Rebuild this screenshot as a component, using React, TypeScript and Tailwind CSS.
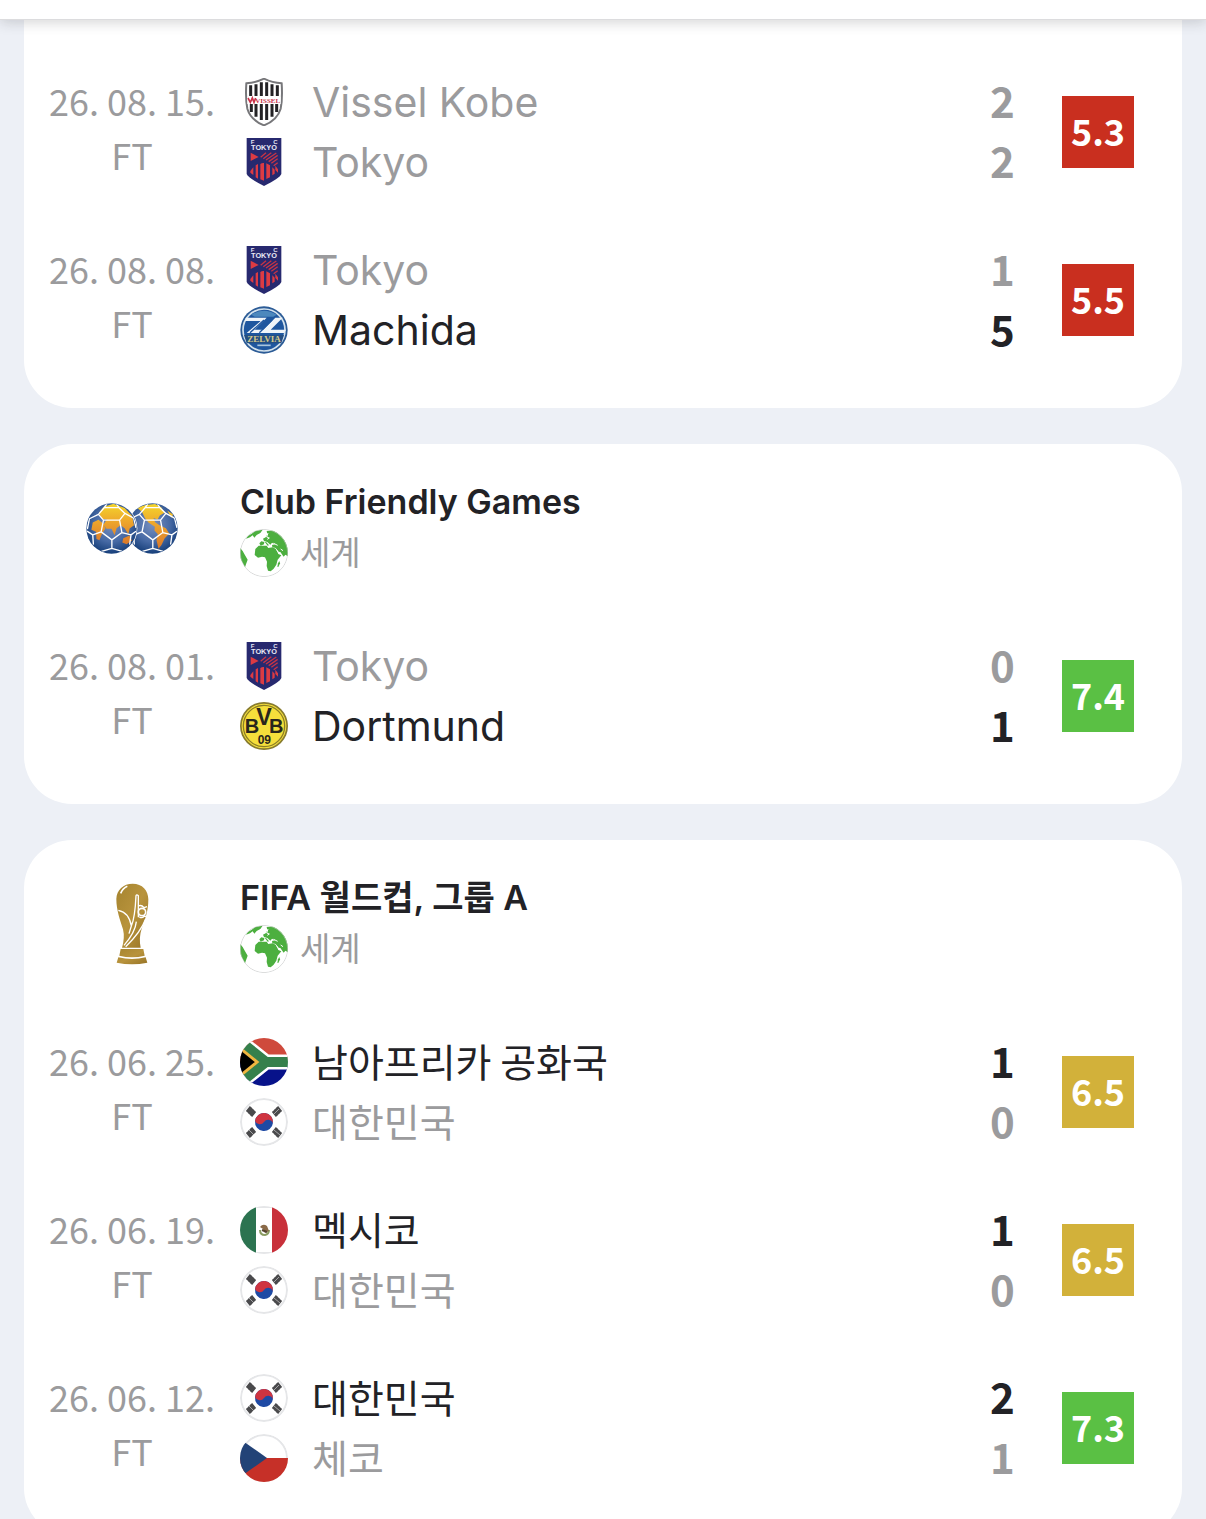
import type { ReactNode } from "react";
import clsx from "clsx";

interface Team {
  name: string;
  icon: ReactNode;
  score: number;
  win?: boolean;
}

interface Match {
  date: string;
  rating: string;
  teams: Team[];
}

interface Tournament {
  title?: string;
  logo?: ReactNode;
  matches: Match[];
}

const KobeIcon = () => (
  <svg viewBox="0 0 144 144" className="size-12 shrink-0" aria-hidden="true">
    <path
      d="M19 16Q48 14 72 2Q96 14 125 16Q128 62 122 92Q112 126 72 142Q32 126 22 92Q16 62 19 16Z"
      fill="#fff"
      stroke="#77777a"
      strokeWidth="6"
    />
    <path
      d="M32 22V54M48 19V54M64 13V54M80 13V54M96 19V54M112 22V54M34 76V102M48 76V116M64 76V126M80 76V126M96 76V116M110 76V102"
      stroke="#232225"
      strokeWidth="9"
    />
    <path d="M22 56H122V78H22Z" fill="#fff" />
    <path d="M24 60L31 73L37 60L42 73L47 60" stroke="#c8324a" strokeWidth="5" fill="none" />
    <text x="83" y="75" fontSize="21" textAnchor="middle" className="font-['Liberation_Serif'] font-bold" fill="#c8324a">
      VISSEL
    </text>
  </svg>
);

const TokyoIcon = () => (
  <svg viewBox="0 0 144 144" className="size-12 shrink-0" aria-hidden="true">
    <path d="M20 0H124V108Q120 120 72 144Q24 120 20 108Z" fill="#27296f" />
    <g className="font-['Liberation_Sans'] font-bold" fill="#e8e8f4" textAnchor="middle">
      <text x="38" y="17" fontSize="18">F</text>
      <text x="106" y="17" fontSize="18">C</text>
      <text x="72" y="37" fontSize="22">TOKYO</text>
    </g>
    <path d="M32 44L56 57L32 69Z" fill="#dd3b43" />
    <path
      d="M62 58L78 44M70 62L94 44M78 66L109 45M86 71L113 52M94 76L113 62M101 83L113 74"
      stroke="#c63545"
      strokeWidth="4"
    />
    <path
      d="M31 99L40 88V111L31 104ZM47 82L54 78V122L47 118ZM61 78Q66 74 72 75V128L61 124ZM79 76L90 82V118L79 123ZM97 88V112L104 107V95ZM106 83L114 94V104L106 96Z"
      fill="#dd3b43"
    />
  </svg>
);

const MachidaIcon = () => (
  <svg viewBox="0 0 144 144" className="size-12 shrink-0" aria-hidden="true">
    <circle cx="72" cy="72" r="71" fill="#2b5b96" />
    <circle cx="72" cy="72" r="63" fill="#1f579f" stroke="#d3e2ed" strokeWidth="5" />
    <path d="M34 26Q72 2 110 26L100 32H44Z" fill="#4c88bd" />
    <path d="M18 35H80L44 71H70L106 35H128L92 71H138L132 81H20L62 45H14Z" fill="#f0f5f9" />
    <path d="M72 42L30 80M96 42L58 80" stroke="#1f579f" strokeWidth="4" />
    <path d="M12 87H132L124 112H20Z" fill="#254f82" />
    <text x="72" y="109" fontSize="27" textAnchor="middle" className="font-['Liberation_Serif'] font-bold" fill="#d4c98a">
      ZELVIA
    </text>
    <path d="M52 118H92" stroke="#a9c5dc" strokeWidth="5" />
  </svg>
);

const DortmundIcon = () => (
  <svg viewBox="0 0 144 144" className="size-12 shrink-0" aria-hidden="true">
    <circle cx="72" cy="72" r="72" fill="#877b2e" />
    <circle cx="72" cy="72" r="67" fill="#f5df3b" />
    <circle cx="72" cy="72" r="62" fill="none" stroke="#8b7e27" strokeWidth="4" />
    <g className="font-['Liberation_Sans'] font-bold" fill="#29261c" textAnchor="middle">
      <text x="36" y="93" fontSize="60">B</text>
      <text x="72" y="69" fontSize="70">V</text>
      <text x="109" y="93" fontSize="60">B</text>
      <text x="73" y="127" fontSize="36">09</text>
    </g>
  </svg>
);

const GlobeIcon = () => (
  <svg viewBox="0 0 144 144" className="size-12 shrink-0 rounded-full" aria-hidden="true">
    <circle cx="72" cy="72" r="71" fill="#fff" />
    <g fill="#4caf3f">
      <path d="M46 60L56 50L80 50L85 57L98 55L108 60L115 75L124 79L113 92L109 107L101 119L92 127L84 125L80 111L81 98L75 85L66 83L54 86L44 78Z" />
      <path d="M114 103L118 96L120 103L115 114L112 113Z" />
      <path d="M0 56L8 66L16 80L23 92L18 106L15 115L7 100L1 90Z" />
      <path d="M24 21L35 14L46 6L68 2L61 12L50 18L43 26L38 19L30 25L18 29Z" />
      <path d="M58 43L64 37L73 39L72 46L62 50ZM74 38L79 40L87 49L83 50Z" />
      <path d="M80 6L104 4L128 22L144 50V82L136 77L131 83L121 69L115 68L107 57L97 55L96 48L106 46L96 41L91 47L82 39L72 36L69 29L77 25L82 16Z" />
    </g>
    <path d="M84 12L80 24L88 27L82 31M101 43L113 49M109 61L118 74M122 60L129 65" stroke="#fff" strokeWidth="3" fill="none" />
    <circle cx="72" cy="72" r="71" fill="none" stroke="#bfc1c1" strokeWidth="2" />
  </svg>
);

const BallLines = () => (
  <path
    d="M52 51H100L107 88L77 110L45 86ZM52 51L37 34L54 14H98L116 31L100 51M37 34L10 47L4 78M54 14L62 3M98 14L91 3M116 31L142 45L149 74M45 86L20 95L3 84M20 95L22 124M77 110V135L46 144M77 135L108 144M107 88L134 95L149 84M134 95L130 124"
    fill="none"
    stroke="#fff"
    strokeWidth="4"
    strokeLinejoin="round"
  />
);

const FriendlyLogo = () => (
  <svg viewBox="0 0 274 152" className="h-[51px] w-[92px]" aria-hidden="true">
    <defs>
      <radialGradient id="ball-sea" cx="50%" cy="42%" r="58%">
        <stop offset="0" stopColor="#7890c0" />
        <stop offset="0.6" stopColor="#4669a4" />
        <stop offset="1" stopColor="#173f7a" />
      </radialGradient>
      <linearGradient id="ball-land" x1="0" y1="0" x2="0" y2="1">
        <stop offset="0" stopColor="#f4d52b" />
        <stop offset="0.45" stopColor="#eda52c" />
        <stop offset="1" stopColor="#d9772a" />
      </linearGradient>
      <clipPath id="ball-clip">
        <circle cx="76" cy="76" r="74" />
      </clipPath>
    </defs>
    <g transform="translate(122 0)">
      <circle cx="76" cy="76" r="75" fill="url(#ball-sea)" />
      <g clipPath="url(#ball-clip)">
        <path
          d="M30 14L55 6L84 3L102 13L113 28L98 37L91 49L79 45L84 57L97 66L116 75L126 91L112 106L103 125L94 136L88 110L92 93L82 82L83 71L64 58L53 44L45 27ZM120 22L138 34L132 44Z"
          fill="url(#ball-land)"
        />
        <BallLines />
      </g>
    </g>
    <circle cx="76" cy="76" r="77" fill="#fff" />
    <circle cx="76" cy="76" r="75" fill="url(#ball-sea)" />
    <g clipPath="url(#ball-clip)">
      <path
        d="M38 30L52 12L82 2L115 15L137 38L143 66L130 76L126 93L115 75L103 66L91 75L85 96L76 77L61 77L52 64L62 49L47 47ZM20 58L37 50L51 61L58 76L48 91L40 111L31 107L30 86L16 80ZM111 105L129 97L137 112L121 123L108 118Z"
        fill="url(#ball-land)"
      />
      <BallLines />
    </g>
  </svg>
);

const WorldCupLogo = () => (
  <svg viewBox="0 0 102 246" className="h-[82px] w-[34px]" aria-hidden="true">
    <defs>
      <linearGradient id="trophy-gold" x1="0" y1="0" x2="1" y2="1">
        <stop offset="0" stopColor="#a5842f" />
        <stop offset="0.5" stopColor="#b8933c" />
        <stop offset="1" stopColor="#967326" />
      </linearGradient>
    </defs>
    <path
      d="M53 2C82 2 100 22 100 49C100 84 91 107 80 137Q71 163 77 194H21Q30 164 24 139C16 113 4 82 4 48C5 20 25 2 53 2Z"
      fill="url(#trophy-gold)"
    />
    <path d="M17 198H85L89 218Q51 228 13 218ZM10 223Q51 233 92 223L97 239Q51 249 5 239Z" fill="url(#trophy-gold)" />
    <path
      d="M10 82Q42 88 49 129Q60 104 63 38Q65 33 70 38V69Q79 64 87 74L96 71M70 69V103M73 101Q81 108 88 99L96 101M64 116Q61 148 27 187M92 108Q77 148 32 191M49 129L42 152"
      fill="none"
      stroke="#fff"
      strokeWidth="4"
    />
    <circle cx="81" cy="87" r="11" fill="url(#trophy-gold)" stroke="#fff" strokeWidth="5" />
    <path d="M17 31Q24 15 37 10" fill="none" stroke="#fff" strokeWidth="5" />
  </svg>
);

const SouthAfricaFlag = () => (
  <svg viewBox="0 0 48 48" className="size-12 shrink-0 rounded-full" aria-hidden="true">
    <path d="M0 0H48V24H0Z" fill="#cf4a3c" />
    <path d="M0 24H48V48H0Z" fill="#07128a" />
    <path d="M-4 0L26 24L-4 48M26 24H48" stroke="#fff" strokeWidth="15" fill="none" />
    <path d="M-4 0L26 24L-4 48M26 24H48" stroke="#35804c" strokeWidth="10" fill="none" />
    <path d="M-5 6L17 24L-5 42Z" fill="#000" stroke="#efb540" strokeWidth="3" />
  </svg>
);

const KoreaFlag = () => (
  <svg viewBox="0 0 48 48" className="size-12 shrink-0 rounded-full" aria-hidden="true">
    <circle cx="24" cy="24" r="23" fill="#fff" stroke="#e5e6e8" strokeWidth="2" />
    <g transform="rotate(6 24 24)">
      <circle cx="24" cy="24" r="9" fill="#1f4ba4" />
      <path d="M15 24A9 9 0 0 1 33 24A5 5 0 0 0 24 24A5 5 0 0 1 15 24Z" fill="#cf3440" />
    </g>
    <g stroke="#4a4a4c" strokeWidth="3">
      <path d="M7 14L11 9M9 16L13 11M11 18L15 13" />
      <path d="M41 14L37 9M39 16L35 11M37 18L33 13" />
      <path d="M7 34L11 39M9 32L13 37M11 30L15 35" />
      <path d="M41 34L37 39M39 32L35 37M37 30L33 35" />
    </g>
    <path d="M34 16L39 11M9 32L14 37M34 32L40 37" stroke="#fff" strokeWidth="1" opacity="0.5" />
  </svg>
);

const MexicoFlag = () => (
  <svg viewBox="0 0 48 48" className="size-12 shrink-0 rounded-full" aria-hidden="true">
    <path d="M0 0H48V48H0Z" fill="#fff" />
    <path d="M0 0H16V48H0Z" fill="#2c7350" />
    <path d="M32 0H48V48H32Z" fill="#c8303a" />
    <path d="M16 1H32M16 47H32" stroke="#e5e6e8" strokeWidth="2" />
    <path d="M20 24Q20 29 25 29Q29 28 29 24" fill="none" stroke="#8a9c62" strokeWidth="2" />
    <path d="M20 21Q23 17 27 20L29 25L25 27L23 23Z" fill="#8a6a48" />
    <path d="M22 24L27 26" stroke="#53422e" strokeWidth="2" />
  </svg>
);

const CzechFlag = () => (
  <svg viewBox="0 0 48 48" className="size-12 shrink-0 rounded-full" aria-hidden="true">
    <circle cx="24" cy="24" r="23" fill="#fff" stroke="#e5e6e8" strokeWidth="2" />
    <path d="M0 24H48V48H0Z" fill="#c63028" />
    <path d="M0 5L27 24L0 43Z" fill="#234377" />
  </svg>
);

const tournaments: Tournament[] = [
  {
    matches: [
      {
        date: "26. 08. 15.",
        rating: "5.3",
        teams: [
          { name: "Vissel Kobe", icon: <KobeIcon />, score: 2 },
          { name: "Tokyo", icon: <TokyoIcon />, score: 2 },
        ],
      },
      {
        date: "26. 08. 08.",
        rating: "5.5",
        teams: [
          { name: "Tokyo", icon: <TokyoIcon />, score: 1 },
          { name: "Machida", icon: <MachidaIcon />, score: 5, win: true },
        ],
      },
    ],
  },
  {
    title: "Club Friendly Games",
    logo: <FriendlyLogo />,
    matches: [
      {
        date: "26. 08. 01.",
        rating: "7.4",
        teams: [
          { name: "Tokyo", icon: <TokyoIcon />, score: 0 },
          { name: "Dortmund", icon: <DortmundIcon />, score: 1, win: true },
        ],
      },
    ],
  },
  {
    title: "FIFA 월드컵, 그룹 A",
    logo: <WorldCupLogo />,
    matches: [
      {
        date: "26. 06. 25.",
        rating: "6.5",
        teams: [
          { name: "남아프리카 공화국", icon: <SouthAfricaFlag />, score: 1, win: true },
          { name: "대한민국", icon: <KoreaFlag />, score: 0 },
        ],
      },
      {
        date: "26. 06. 19.",
        rating: "6.5",
        teams: [
          { name: "멕시코", icon: <MexicoFlag />, score: 1, win: true },
          { name: "대한민국", icon: <KoreaFlag />, score: 0 },
        ],
      },
      {
        date: "26. 06. 12.",
        rating: "7.3",
        teams: [
          { name: "대한민국", icon: <KoreaFlag />, score: 2, win: true },
          { name: "체코", icon: <CzechFlag />, score: 1 },
        ],
      },
    ],
  },
];

const ratingColor = (rating: string) => {
  const value = Number(rating);
  if (value >= 7) return "bg-[#5ac044]";
  if (value >= 6) return "bg-[#d2b13a]";
  return "bg-[#c92f1f]";
};

const isKorean = (text: string) => /[가-힣]/.test(text);

const TeamLine = ({ team }: { team: Team }) => (
  <div
    className={clsx(
      "flex h-[60px] items-center gap-6",
      team.win ? "text-[#222226]" : "text-[#9b9b9d]",
    )}
  >
    {team.icon}
    <p
      className={clsx(
        "flex-1 whitespace-nowrap",
        isKorean(team.name)
          ? "pb-1 font-['Noto_Sans_CJK_KR',sans-serif] text-[39px]"
          : "font-['Inter','Liberation_Sans',sans-serif] text-[41px]",
      )}
    >
      {team.name}
    </p>
    <p className="w-6 pb-1 text-center font-['Noto_Sans_CJK_KR',sans-serif] text-[42px] font-bold">
      {team.score}
    </p>
  </div>
);

const MatchRow = ({ match }: { match: Match }) => (
  <li className="flex items-center py-6 pr-12">
    <div className="w-[216px] pb-2.5 text-center font-['Noto_Sans_CJK_KR',sans-serif] text-[36px] leading-[54px] text-[#9b9b9d]">
      <p>{match.date}</p>
      <p>FT</p>
    </div>
    <div className="flex-1 leading-[60px]">
      {match.teams.map((team) => (
        <TeamLine key={team.name} team={team} />
      ))}
    </div>
    <p
      className={clsx(
        "ml-12 flex size-[72px] items-center justify-center pb-1 font-['Noto_Sans_CJK_KR',sans-serif] text-[36px] font-bold text-white",
        ratingColor(match.rating),
      )}
    >
      {match.rating}
    </p>
  </li>
);

const TournamentCard = ({ tournament }: { tournament: Tournament }) => (
  <section
    className={clsx(
      "bg-white pb-6",
      tournament.title ? "rounded-[48px]" : "rounded-b-[48px] pt-7",
    )}
  >
    {tournament.title && (
      <header className="flex h-[168px] items-center">
        <div className="flex w-[216px] justify-center">{tournament.logo}</div>
        <div>
          <h2 className="h-[50px] font-['Inter','Noto_Sans_CJK_KR',sans-serif] text-[34px] leading-[48px] font-semibold text-[#222226]">
            {tournament.title}
          </h2>
          <div className="flex h-[50px] items-center gap-3">
            <GlobeIcon />
            <p className="pb-1 font-['Noto_Sans_CJK_KR',sans-serif] text-[33px] leading-[48px] text-[#9b9b9d]">
              세계
            </p>
          </div>
        </div>
      </header>
    )}
    <ul>
      {tournament.matches.map((match) => (
        <MatchRow key={match.date} match={match} />
      ))}
    </ul>
  </section>
);

const App = () => (
  <div className="h-screen overflow-hidden bg-[#edf0f6]">
    <div className="relative h-5 border-b border-[#dcdcde] bg-white shadow-[0_2px_14px_rgba(34,34,38,0.2)]" />
    <main className="flex flex-col gap-9 px-6">
      {tournaments.map((tournament, i) => (
        <TournamentCard key={i} tournament={tournament} />
      ))}
    </main>
  </div>
);

export default App;
